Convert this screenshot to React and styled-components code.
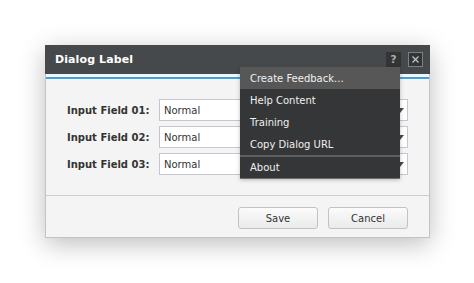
import React from "react";
import styled, { createGlobalStyle } from "styled-components";

const Global = createGlobalStyle`
  html, body { margin: 0; padding: 0; background: #ffffff; }
  body { font-family: "DejaVu Sans", Verdana, sans-serif; }
  * { box-sizing: border-box; }
`;

const Page = styled.div`
  width: 474px;
  height: 283px;
  padding: 45px 0 0 45px;
  background: #ffffff;
`;

const Dialog = styled.div`
  position: relative;
  width: 385px;
  background: #f4f4f4;
  border: 1px solid #c3c3c3;
  border-top: none;
  box-shadow: 0 6px 24px rgba(0, 0, 0, 0.26);
`;

const TitleBar = styled.div`
  height: 29px;
  margin: 0 -1px;
  background: #46494b;
  display: flex;
  align-items: center;
  justify-content: space-between;
  padding: 0 7px 0 10px;
`;

const Title = styled.div`
  color: #ffffff;
  font-size: 11px;
  font-weight: bold;
  letter-spacing: 0.1px;
`;

const TitleTools = styled.div`
  display: flex;
  gap: 7px;
`;

const ToolButton = styled.div`
  width: 15px;
  height: 15px;
  display: flex;
  align-items: center;
  justify-content: center;
  background: #323435;
  border: 1px solid ${(p) => (p.$framed ? "#7d8081" : "#323435")};
  color: #a9abac;
  font-size: 11px;
  font-weight: bold;
  line-height: 1;
`;

const AccentRule = styled.div`
  height: 2px;
  margin-top: 3px;
  background: #3ba2dc;
`;

const Body = styled.div`
  padding: 20px 21px 20px 21px;
  display: flex;
  flex-direction: column;
  gap: 5px;
  border-bottom: 1px solid #cccccc;
`;

const FieldRow = styled.div`
  display: flex;
  align-items: center;
  justify-content: space-between;
`;

const Label = styled.label`
  color: #333333;
  font-size: 10px;
  font-weight: bold;
`;

const Select = styled.div`
  position: relative;
  width: 249px;
  height: 22px;
  background: #ffffff;
  border: 1px solid #c4c7cf;
  display: flex;
  align-items: center;
  padding-left: 4px;
  color: #333333;
  font-size: 10px;
`;

const Arrow = styled.svg`
  position: absolute;
  right: 3px;
  top: 8px;
`;

const Footer = styled.div`
  display: flex;
  justify-content: flex-end;
  gap: 10px;
  padding: 11px 21px 8px 0;
`;

const Button = styled.button`
  width: 80px;
  height: 22px;
  border: 1px solid #c2c2c2;
  border-radius: 3px;
  background: linear-gradient(#fbfbfb, #e9eaea);
  color: #333333;
  font-family: "DejaVu Sans", Verdana, sans-serif;
  font-size: 10px;
  padding: 0;
`;

const Menu = styled.div`
  position: absolute;
  left: 194px;
  top: 22px;
  width: 160px;
  background: #353637;
  box-shadow: 0 1px 0 #6b6c6d, 0 2px 4px rgba(0, 0, 0, 0.25);
  display: flex;
  flex-direction: column;
`;

const MenuItem = styled.div`
  height: ${(p) => p.$h || 22}px;
  display: flex;
  align-items: center;
  padding-left: 10px;
  color: #f0f0f0;
  font-size: 10px;
  background: ${(p) => (p.$active ? "#575757" : "transparent")};
`;

const MenuSeparator = styled.div`
  height: 2px;
  background: #5c5d5e;
`;

const fields = ["Input Field 01:", "Input Field 02:", "Input Field 03:"];

export default function App() {
  return (
    <Page>
      <Global />
      <Dialog>
        <TitleBar>
          <Title>Dialog Label</Title>
          <TitleTools>
            <ToolButton>?</ToolButton>
            <ToolButton $framed>
              <svg width="7" height="7" viewBox="0 0 7 7">
                <path d="M0.5 0.5 L6.5 6.5 M6.5 0.5 L0.5 6.5" stroke="#c4c6c7" strokeWidth="1.2" />
              </svg>
            </ToolButton>
          </TitleTools>
        </TitleBar>
        <AccentRule />
        <Body>
          {fields.map((f) => (
            <FieldRow key={f}>
              <Label>{f}</Label>
              <Select>
                Normal
                <Arrow width="8" height="5" viewBox="0 0 8 5">
                  <path d="M0 0 L8 0 L4 5 Z" fill="#4a4a4a" />
                </Arrow>
              </Select>
            </FieldRow>
          ))}
        </Body>
        <Footer>
          <Button>Save</Button>
          <Button>Cancel</Button>
        </Footer>
        <Menu>
          <MenuItem $active>Create Feedback...</MenuItem>
          <MenuItem>Help Content</MenuItem>
          <MenuItem>Training</MenuItem>
          <MenuItem>Copy Dialog URL</MenuItem>
          <MenuSeparator />
          <MenuItem $h={21}>About</MenuItem>
        </Menu>
      </Dialog>
    </Page>
  );
}
